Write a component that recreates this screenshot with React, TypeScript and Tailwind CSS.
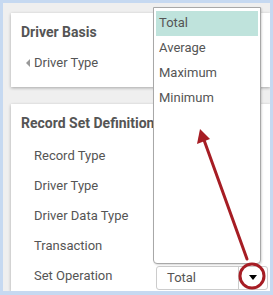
import React from "react";

const font = { fontFamily: "Roboto, 'Noto Sans', Arial, sans-serif" };

const rows = ["Record Type", "Driver Type", "Driver Data Type", "Transaction"];
const options = ["Total", "Average", "Maximum", "Minimum"];

export default function App() {
  return (
    <div
      className="relative h-[295px] w-[273px] overflow-hidden bg-[#c6d9f1] pb-[4px] pl-[3px] pr-[3px] pt-[3px] text-[13px] text-[#555]"
      style={font}
    >
      <div className="flex h-full flex-col gap-[17px] overflow-hidden bg-[#efefef] pl-[8px] pt-[10px]">
        {/* Driver Basis */}
        <div className="h-[74px] shrink-0 bg-white pl-[10px] pt-[10px] shadow-[0_1px_3px_rgba(0,0,0,0.3)]">
          <div className="h-[18px] text-[14px] font-bold leading-[18px] text-[#555]">Driver Basis</div>
          <div className="mt-[14px] flex h-[16px] items-center pl-[5px] leading-[16px]">
            <span className="mr-[4px] h-0 w-0 border-y-[4px] border-r-[4px] border-y-transparent border-r-[#999]" />
            <span>Driver Type</span>
          </div>
        </div>

        {/* Record Set Definition */}
        <div className="flex-1 bg-white pt-[10px] shadow-[0_1px_3px_rgba(0,0,0,0.3)]">
          <div className="h-[18px] whitespace-nowrap pl-[10px] text-[14px] font-bold leading-[18px] text-[#555]">
            Record Set Definition
          </div>
          <div className="mt-[9px] flex flex-col">
            {rows.map((r) => (
              <div key={r} className="flex h-[30px] items-center pl-[23px]">
                {r}
              </div>
            ))}
            <div className="flex h-[30px] items-center pl-[23px]">
              <span className="w-[122px] shrink-0">Set Operation</span>
              <div className="mt-[3px] flex h-[24px] w-[112px] items-center rounded-[3px] border border-[#ccc] bg-white">
                <span className="flex-1 pl-[10px] text-[#555]">Total</span>
                <span className="flex h-full w-[29px] items-center justify-center border-l border-[#ccc]">
                  <span className="h-0 w-0 border-x-[4px] border-t-[5px] border-x-transparent border-t-black" />
                </span>
              </div>
            </div>
          </div>
        </div>
      </div>

      {/* open list */}
      <div className="absolute left-[153px] top-[7px] h-[257px] w-[108px] rounded-b-[4px] border border-[#a8a8a8] bg-white px-[2px] pt-[3px] shadow-[1px_1px_2px_rgba(0,0,0,0.15)]">
        {options.map((o, i) => (
          <div
            key={o}
            className={
              i === 0
                ? "flex h-[25px] items-center bg-[#bfe3dc] pb-[2px] pl-[3px] text-[#555]"
                : "flex h-[25px] items-center pb-[2px] pl-[3px] text-[#555]"
            }
          >
            {o}
          </div>
        ))}
      </div>

      {/* annotation */}
      <svg className="pointer-events-none absolute left-0 top-0" width="273" height="295" viewBox="0 0 273 295">
        <line x1="247" y1="259" x2="204" y2="140" stroke="#a61d24" strokeWidth="3" strokeLinecap="round" />
        <polygon points="200,129 197,144 210,139" fill="#a61d24" />
        <circle cx="252" cy="276" r="12" fill="none" stroke="#a61d24" strokeWidth="3" />
      </svg>
    </div>
  );
}
